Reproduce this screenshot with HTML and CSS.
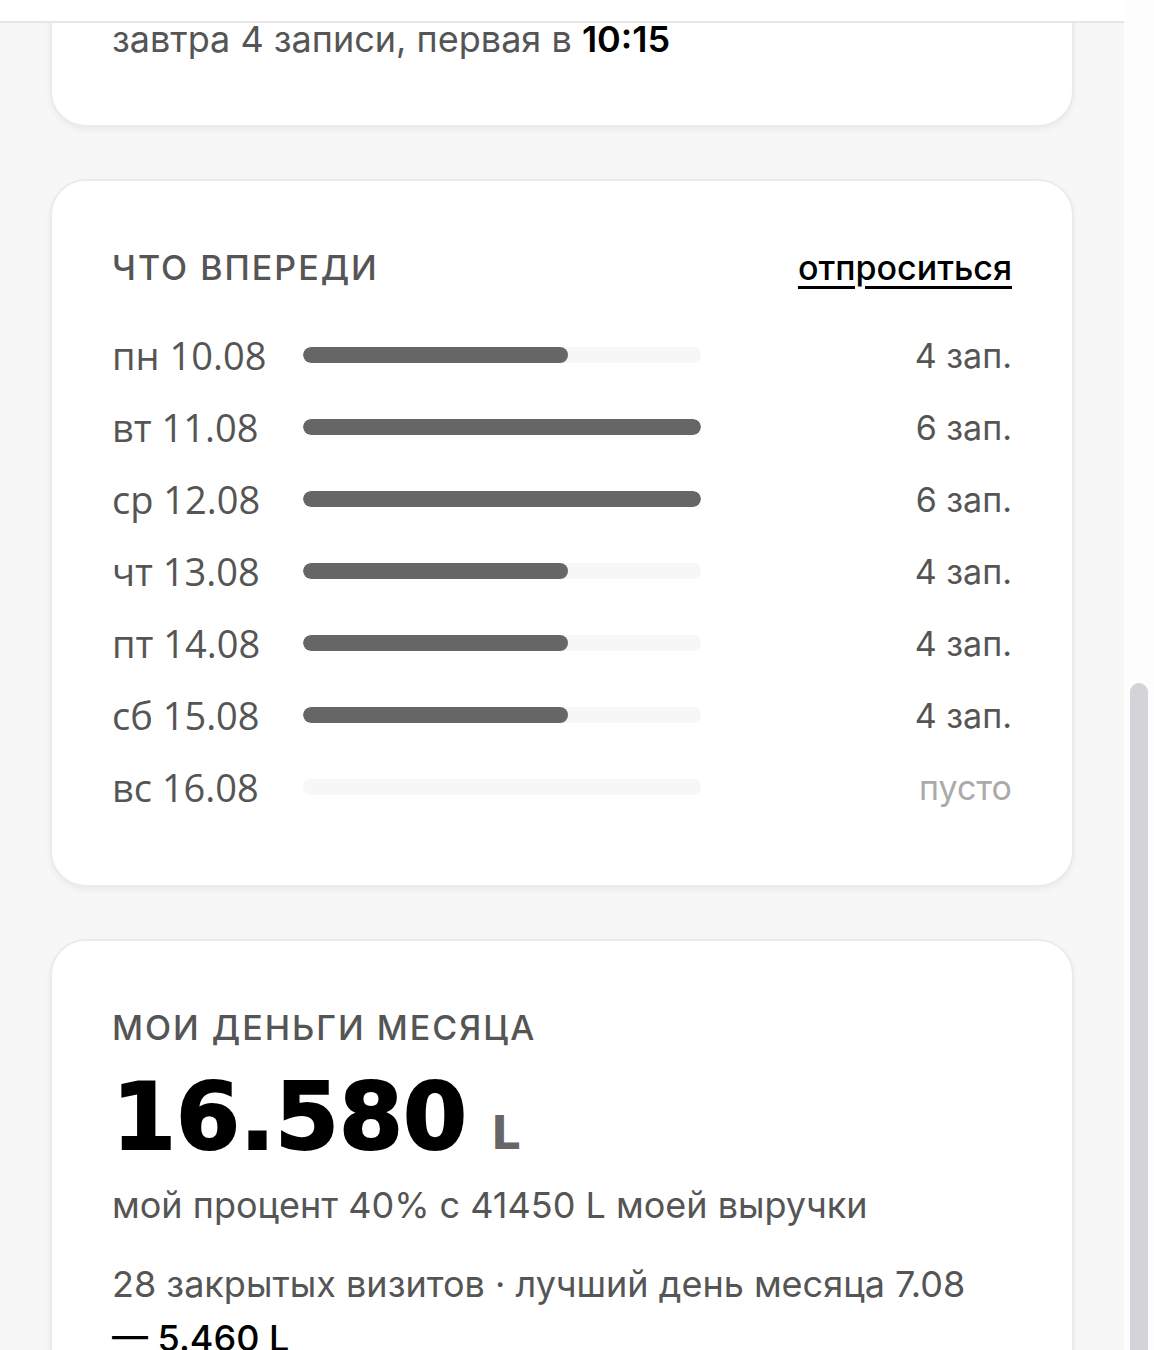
FILE: index.html
```html
<!DOCTYPE html>
<html lang="ru">
<head>
    <meta charset="UTF-8">
    <meta name="viewport" content="width=device-width, initial-scale=1.0">
    <title>Мой день</title>
    <link rel="stylesheet" href="styles.css">
</head>
<body>
    <div class="screen">
        <div class="app" id="app">
            <header class="topbar"></header>

            <main class="feed">
                <!-- greeting -->
                <section class="hello">
                    <div class="hello-name">Привет, Аня</div>
                    <p class="muted">суббота, 8 августа · смена до 20:00</p>
                </section>

                <!-- today -->
                <section class="card" id="todayCard">
                    <div class="card-head">
                        <div class="card-title">Сегодня</div>
                    </div>
                    <div class="big">3 <span class="unit">записи</span></div>
                    <ul class="visits">
                        <li><span class="time">11:00</span> Мария К. · стрижка</li>
                        <li><span class="time">13:30</span> Ольга Т. · окрашивание</li>
                        <li><span class="time">17:00</span> Ирина С. · укладка</li>
                    </ul>
                    <p class="muted">завтра 4 записи, первая в <strong>10:15</strong></p>
                </section>

                <!-- week ahead -->
                <section class="card">
                    <div class="card-head">
                        <div class="card-title">Что впереди</div>
                        <a href="#" class="link">отпроситься</a>
                    </div>
                    <div class="week">
                        <div class="day">пн 10.08</div>
                        <div class="bar"><div class="fill" style="width: 66.6%"></div></div>
                        <div class="count">4 зап.</div>

                        <div class="day">вт 11.08</div>
                        <div class="bar"><div class="fill" style="width: 100%"></div></div>
                        <div class="count">6 зап.</div>

                        <div class="day">ср 12.08</div>
                        <div class="bar"><div class="fill" style="width: 100%"></div></div>
                        <div class="count">6 зап.</div>

                        <div class="day">чт 13.08</div>
                        <div class="bar"><div class="fill" style="width: 66.6%"></div></div>
                        <div class="count">4 зап.</div>

                        <div class="day">пт 14.08</div>
                        <div class="bar"><div class="fill" style="width: 66.6%"></div></div>
                        <div class="count">4 зап.</div>

                        <div class="day">сб 15.08</div>
                        <div class="bar"><div class="fill" style="width: 66.6%"></div></div>
                        <div class="count">4 зап.</div>

                        <div class="day">вс 16.08</div>
                        <div class="bar"></div>
                        <div class="count empty">пусто</div>
                    </div>
                </section>

                <!-- money -->
                <section class="card">
                    <div class="card-head">
                        <div class="card-title">Мои деньги месяца</div>
                    </div>
                    <div class="money">16.580<span class="cur">L</span></div>
                    <p class="muted">мой процент 40% с 41450 L моей выручки</p>
                    <p class="muted stats">28 закрытых визитов · лучший день месяца 7.08 <strong>—&nbsp;5.460&nbsp;L</strong></p>
                </section>
            </main>
        </div>

        <!-- scroll rail -->
        <div class="rail"><div class="thumb"></div></div>
    </div>

    <script>
        const app = document.getElementById('app');
        const today = document.getElementById('todayCard');
        app.scrollTop = today.offsetTop + today.offsetHeight - 127;
    </script>
</body>
</html>
```

FILE: styles.css
```css
html, body {
    margin: 0;
    padding: 0;
    height: 100%;
    overflow: hidden;
}

body {
    font-family: 'Inter', 'Noto Sans', Arial, sans-serif;
    background: #fdfdfd;
    color: #555;
}

.screen {
    display: flex;
    height: 100vh;
}

.app {
    flex: 1;
    min-width: 0;
    overflow-y: auto;
    scrollbar-width: none;
    background: #f7f7f7;
}

.rail {
    width: 30px;
    flex-shrink: 0;
    box-sizing: border-box;
    padding: 683px 6px 0;
    background: #fdfdfd;
}

.thumb {
    height: 100%;
    background: #d4d4d8;
    border-radius: 9px 9px 0 0;
}

.topbar {
    position: sticky;
    top: 0;
    z-index: 2;
    height: 21px;
    background: #fff;
    border-bottom: 2px solid #e6e6e6;
}

.feed {
    padding: 40px 50px 50px;
    display: flex;
    flex-direction: column;
    gap: 52px;
}

.hello {
    padding: 20px 62px 0;
}

.hello-name {
    font-size: 56px;
    font-weight: 800;
    color: #000;
}

.card {
    background: #fff;
    border: 2px solid #ebebeb;
    border-radius: 36px;
    padding: 60px 60px 62px;
    box-shadow: 0 3px 6px rgba(0, 0, 0, 0.05);
}

.card-head {
    display: flex;
    justify-content: space-between;
    align-items: center;
    height: 52px;
}

.card-title {
    font-size: 34px;
    font-weight: 500;
    letter-spacing: 2px;
    text-transform: uppercase;
    color: #555;
}

.link {
    font-size: 34px;
    font-weight: 500;
    color: #000;
    text-decoration: underline;
    text-decoration-thickness: 3px;
    text-underline-offset: 6px;
}

.muted {
    margin: 0;
    font-size: 36px;
    line-height: 48px;
    color: #555;
}

.muted strong {
    font-weight: 600;
    color: #000;
}

.big {
    font-size: 64px;
    font-weight: 800;
    color: #000;
    margin: 20px 0;
}

.big .unit {
    font-size: 32px;
    font-weight: 500;
    color: #666;
}

.visits {
    list-style: none;
    margin: 0 0 24px;
    padding: 0;
    font-size: 32px;
    line-height: 60px;
}

.visits .time {
    color: #000;
    font-weight: 500;
    margin-right: 12px;
}

/* week rows */
.week {
    margin-top: 26px;
    display: grid;
    grid-template-columns: 191px 398px 1fr;
    grid-auto-rows: 72px;
    align-items: center;
}

.day {
    font-family: 'Open Sans', 'Noto Sans', sans-serif;
    font-size: 38px;
    color: #555;
}

.bar {
    height: 16px;
    border-radius: 8px;
    background: #f7f7f7;
    overflow: hidden;
}

.fill {
    height: 100%;
    border-radius: 8px;
    background: #666;
}

.count {
    text-align: right;
    font-size: 34px;
    color: #555;
}

.count.empty {
    color: #aaa;
}

/* month money */
.money {
    margin-top: 19px;
    font-family: 'DejaVu Sans', sans-serif;
    font-size: 92px;
    font-weight: 700;
    line-height: 92px;
    color: #000;
    -webkit-text-stroke: 2px #000;
}

.money .cur {
    margin-left: 24px;
    font-size: 46px;
    color: #666;
    -webkit-text-stroke: 0;
}

.money + .muted {
    margin-top: 2px;
}

.stats {
    margin-top: 28px;
    line-height: 54px;
}

.stats strong {
    font-weight: 500;
}
```
